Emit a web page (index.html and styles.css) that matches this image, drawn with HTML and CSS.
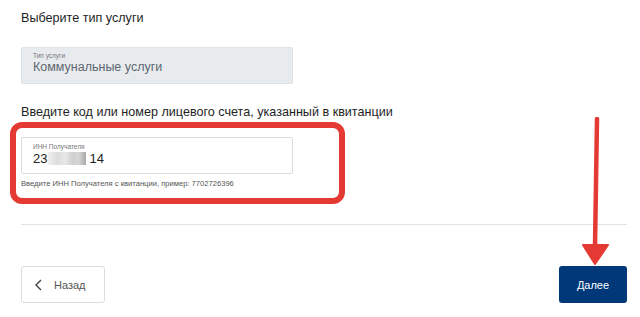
FILE: index.html
```html
<!DOCTYPE html>
<html lang="ru">
<head>
<meta charset="utf-8">
<link rel="stylesheet" href="styles.css">
</head>
<body>
<div class="page">
  <h2 class="title t1">Выберите тип услуги</h2>
  <div class="field field-disabled">
    <div class="field-label">Тип услуги</div>
    <div class="field-value muted">Коммунальные услуги</div>
  </div>
  <h2 class="title t2">Введите код или номер лицевого счета, указанный в квитанции</h2>
  <div class="field field-input">
    <div class="field-label">ИНН Получателя</div>
    <div class="field-value">23<span class="blur"></span>14</div>
  </div>
  <div class="hint">Введите ИНН Получателя с квитанции, пример: 7702726396</div>
  <hr class="divider">
  <div class="actions">
    <button class="btn btn-back"><svg class="chev" width="7" height="12" viewBox="0 0 7 12"><path d="M6 1 L1 6 L6 11" fill="none" stroke="#444" stroke-width="1.4"/></svg><span>Назад</span></button>
    <button class="btn btn-next">Далее</button>
  </div>
  <div class="highlight"></div>
  <svg class="arrow" width="30" height="152" viewBox="0 0 30 152"><path d="M16 2 L14 130" stroke="#e53a33" stroke-width="4.5" stroke-linecap="round" fill="none"/><path d="M2 128 L27 128 L14 147 Z" fill="#e53a33" stroke="#e53a33" stroke-width="2" stroke-linejoin="round"/></svg>
</div>
</body>
</html>
```
FILE: styles.css
```css
html, body { margin: 0; padding: 0; background: #fff; }
body { font-family: "Liberation Sans", Arial, sans-serif; color: #222; }
.page { position: relative; width: 640px; height: 317px; padding: 0 13px 0 21px; box-sizing: border-box; overflow: hidden; }
.title { margin: 0; font-weight: normal; font-size: 12.6px; line-height: 16px; color: #1e1e1e; font-family: "Liberation Sans", Arial, sans-serif; }
.t1 { padding-top: 10px; }
.t2 { margin-top: 20px; }
.field { box-sizing: border-box; width: 272px; height: 37px; border-radius: 2px; padding: 4px 0 0 11px; }
.field-disabled { margin-top: 21px; background: #e8ebee; border: 1px solid #dfe3e7; }
.field-input { margin-top: 17px; background: #fff; border: 1px solid #d9dcdf; padding-top: 5px; }
.field-label { font-size: 6.5px; line-height: 8px; color: #777; }
.field-value { font-size: 13px; line-height: 15px; color: #222; display: flex; align-items: center; }
.field-value.muted { color: #5e6670; font-size: 12.5px; margin-top: 0; }
.blur { display: inline-block; width: 38px; height: 13px; margin: 0 3px 0 1px; background: linear-gradient(90deg, #f1f1f1 0%, #dcdcdc 25%, #e8e8e8 45%, #cfcfcf 65%, #d6d6d6 80%, #a9a9a9 100%); }
.hint { margin-top: 5px; font-size: 7.6px; line-height: 10px; color: #555; }
.divider { margin: 35px 0 0 0; border: 0; border-top: 1px solid #e2e2e2; height: 0; }
.actions { display: flex; justify-content: space-between; margin-top: 41px; }
.btn { height: 37px; border-radius: 3px; font-family: "Liberation Sans", Arial, sans-serif; font-size: 11px; cursor: pointer; }
.btn-back { width: 84px; background: #fff; border: 1px solid #dadcde; color: #555; display: flex; align-items: center; gap: 12px; padding: 0 0 0 13px; }
.btn-next { width: 68px; background: #00387a; border: 0; color: #fff; }
.highlight { position: absolute; left: 10px; top: 122px; width: 335px; height: 82px; box-sizing: border-box; border: 6px solid #e53a33; border-radius: 12px; }
.arrow { position: absolute; left: 581px; top: 117px; }
```
